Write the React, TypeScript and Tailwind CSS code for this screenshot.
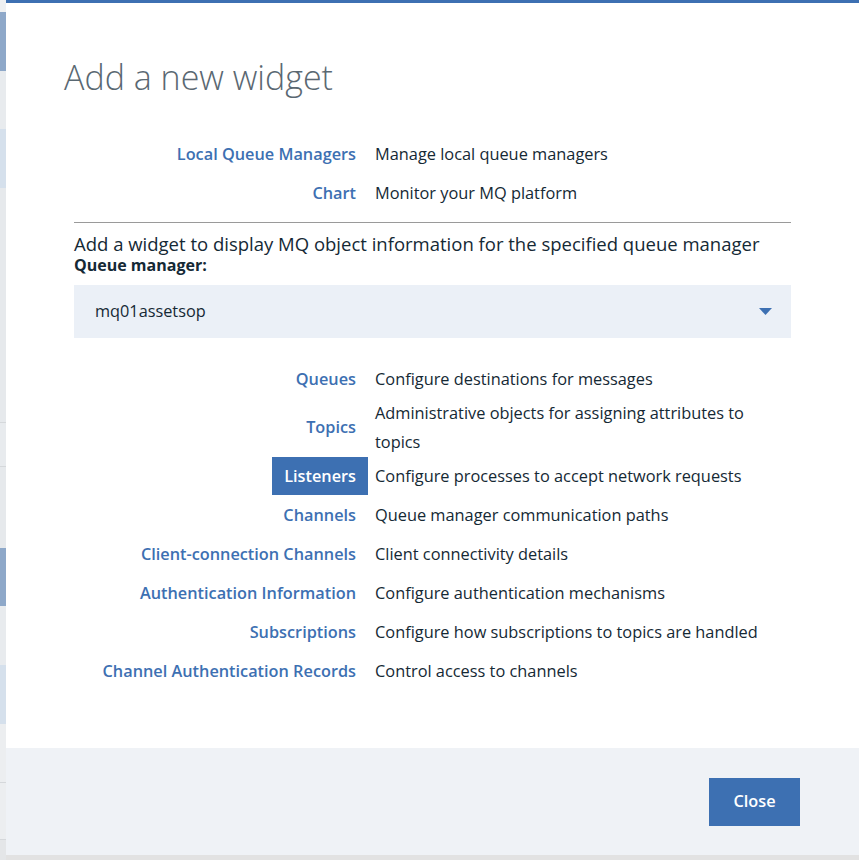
import React from "react";

const font = { fontFamily: '"Open Sans", "Noto Sans", sans-serif' };

type Row = { label: string; desc: React.ReactNode; active?: boolean; tall?: boolean };

const top: Row[] = [
  { label: "Local Queue Managers", desc: "Manage local queue managers" },
  { label: "Chart", desc: "Monitor your MQ platform" },
];

const objects: Row[] = [
  { label: "Queues", desc: "Configure destinations for messages" },
  {
    label: "Topics",
    desc: (
      <>
        Administrative objects for assigning attributes to
        <br />
        topics
      </>
    ),
    tall: true,
  },
  { label: "Listeners", desc: "Configure processes to accept network requests", active: true },
  { label: "Channels", desc: "Queue manager communication paths" },
  { label: "Client-connection Channels", desc: "Client connectivity details" },
  { label: "Authentication Information", desc: "Configure authentication mechanisms" },
  { label: "Subscriptions", desc: "Configure how subscriptions to topics are handled" },
  { label: "Channel Authentication Records", desc: "Control access to channels" },
];

function Table({ rows }: { rows: Row[] }) {
  return (
    <div className="flex flex-col gap-px">
      {rows.map((r) => (
        <div key={r.label} className="flex items-center">
          <div className="w-[294px] shrink-0 flex justify-end">
            <span
              className={
                "h-[38px] flex items-center px-3 text-[16.3px] font-semibold whitespace-nowrap " +
                (r.active ? "bg-[#3d70b2] text-white" : "text-[#3d70b2]")
              }
            >
              {r.label}
            </span>
          </div>
          <div className="pl-[7px] text-[16.35px] leading-[28.5px] text-[#152935] whitespace-nowrap">
            {r.desc}
          </div>
        </div>
      ))}
    </div>
  );
}

export default function App() {
  const strip = [
    { h: 12, c: "bg-[#eef0f2]" },
    { h: 59, c: "bg-[#8ea8c9]" },
    { h: 58, c: "bg-[#e8ebee]" },
    { h: 59, c: "bg-[#d5e0ec]" },
    { h: 235, c: "bg-[#e6e9ec] border-b border-[#d5d8db]" },
    { h: 44, c: "bg-[#e8ebee] border-b border-[#d5d8db]" },
    { h: 81, c: "bg-[#e6e9ec]" },
    { h: 58, c: "bg-[#8ea8c9]" },
    { h: 59, c: "bg-[#e8ebee]" },
    { h: 59, c: "bg-[#d5e0ec]" },
    { h: 59, c: "bg-[#eceef0] border-b border-[#d5d8db]" },
    { h: 57, c: "bg-[#eceef0] border-b border-[#d5d8db]" },
    { h: 20, c: "bg-[#e4e6e8]" },
  ];
  return (
    <div className="w-[859px] h-[860px] flex overflow-hidden bg-white" style={font}>
      <div className="w-[6px] shrink-0 flex flex-col">
        {strip.map((s, i) => (
          <div key={i} className={s.c} style={{ height: s.h }} />
        ))}
      </div>
      <div className="flex-1 flex flex-col bg-[#e2e2e2]">
        <div className="h-[855px] flex flex-col bg-white border-t-[3px] border-[#3d70b2]">
          <div className="flex-1 flex flex-col">
            <h1 className="pl-[58px] pt-[52px] text-[34px] leading-[45px] font-light text-[#5a6872]">
              Add a new widget
            </h1>
            <div className="px-[68px] flex flex-col">
              <div className="mt-[35px]">
                <Table rows={top} />
              </div>
              <div className="mt-[10px] h-px bg-[#9a9a9a]" />
              <div className="mt-[10px] text-[18.5px] leading-[22px] text-[#152935] whitespace-nowrap">
                Add a widget to display MQ object information for the specified queue manager
              </div>
              <div className="text-[16px] leading-[20px] font-bold text-[#152935]">Queue manager:</div>
              <div className="mt-[10px] h-[53px] bg-[#ebf0f7] flex items-center justify-between pl-[21px] pr-[19px]">
                <span className="text-[16.3px] text-[#152935]">mq01assetsop</span>
                <svg width="13" height="7" viewBox="0 0 13 7">
                  <path d="M0 0 L13 0 L6.5 7 Z" fill="#3d70b2" />
                </svg>
              </div>
              <div className="mt-[22px]">
                <Table rows={objects} />
              </div>
            </div>
          </div>
          <div className="h-[107px] bg-[#eff2f6] flex items-center justify-end pr-[59px]">
            <button className="w-[91px] h-[48px] bg-[#3d70b2] text-white text-[16.3px] font-semibold">
              Close
            </button>
          </div>
        </div>
      </div>
    </div>
  );
}
